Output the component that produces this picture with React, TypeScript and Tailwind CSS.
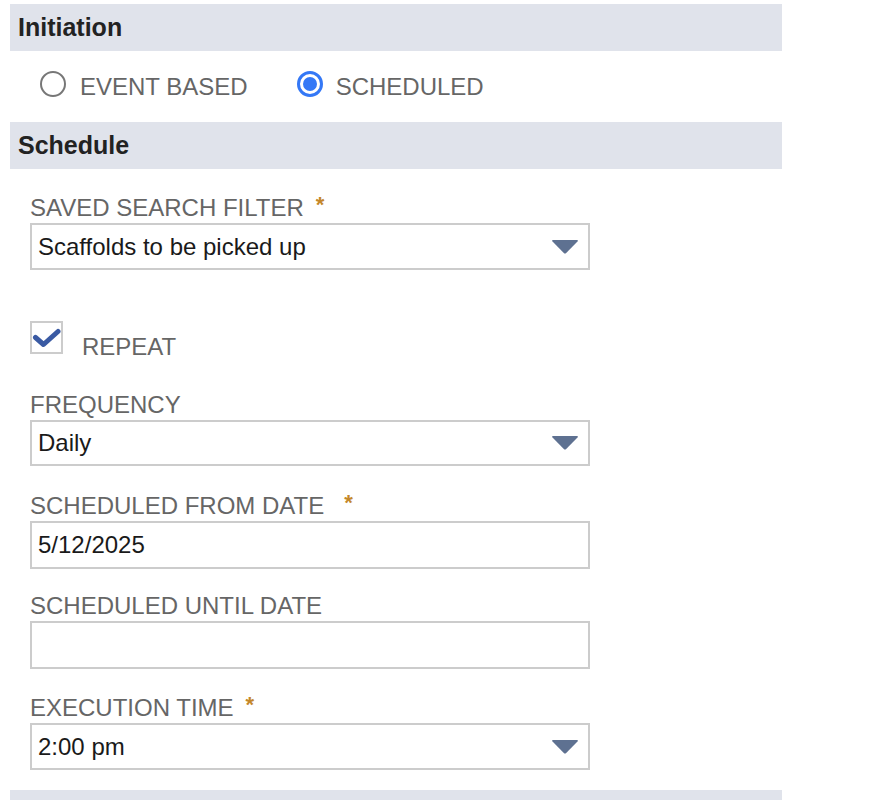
import React from "react";

const font = { fontFamily: '"Liberation Sans", Arial, sans-serif' };

function SectionBar({ title }: { title: string }) {
  return (
    <div className="h-[47px] flex items-center pl-2 bg-[#e0e3eb] text-[25px] font-bold text-[#222] leading-none">
      {title}
    </div>
  );
}

function Arrow() {
  return (
    <svg width="26" height="14" viewBox="0 0 26 14" className="shrink-0">
      <path d="M1 0 L25 0 Q26.5 0 25.5 1.5 L14.2 13 Q13 14.2 11.8 13 L0.5 1.5 Q-0.5 0 1 0 Z" fill="#5e7191" />
    </svg>
  );
}

function Label({ text, required, gap = "ml-3" }: { text: string; required?: boolean; gap?: string }) {
  return (
    <div className="h-[28px] leading-[28px] text-[24px] text-[#666] flex items-start">
      <span>{text}</span>
      {required && <span className={`${gap} text-[#c4872a] text-[22px] font-bold leading-[22px]`}>*</span>}
    </div>
  );
}

function Select({ value, h = "h-[47px]" }: { value: string; h?: string }) {
  return (
    <div className={`${h} mt-px w-[560px] border-2 border-[#cccccc] flex items-center justify-between pl-[6px] pr-[10px] text-[24px] text-[#1a1a1a]`}>
      <span>{value}</span>
      <Arrow />
    </div>
  );
}

function TextBox({ value }: { value: string }) {
  return (
    <div className="h-[48px] mt-px w-[560px] border-2 border-[#cccccc] flex items-center pl-[6px] text-[24px] text-[#1a1a1a]">
      {value}
    </div>
  );
}

export default function App() {
  return (
    <div className="min-h-[800px] bg-white pt-1" style={font}>
      <div className="ml-[10px] w-[772px]">
        <SectionBar title="Initiation" />
        <div className="h-[71px] flex items-center pl-[30px] text-[24px] text-[#666]">
          <div className="flex items-center">
            <span className="w-[26px] h-[26px] rounded-full border-2 border-[#777] -mt-[5px]" />
            <span className="ml-[14px]">EVENT BASED</span>
          </div>
          <div className="flex items-center ml-[49px]">
            <span className="w-[26px] h-[26px] rounded-full border-[3px] border-[#3478f6] flex items-center justify-center -mt-[5px]">
              <span className="w-[14px] h-[14px] rounded-full bg-[#3478f6]" />
            </span>
            <span className="ml-[13px]">SCHEDULED</span>
          </div>
        </div>
        <SectionBar title="Schedule" />

        <div className="pl-5">
          <div className="pt-[25px]">
            <Label text="SAVED SEARCH FILTER" required gap="ml-[12px]" />
            <Select value="Scaffolds to be picked up" />
          </div>

          <div className="mt-[51px] flex items-start h-[36px]">
            <span className="w-[33px] h-[33px] border-2 border-[#cccccc] flex items-center justify-center">
              <svg width="29" height="29" viewBox="0 0 29 29">
                <path d="M3.5 14.5 L11.5 21.5 L26 8.5" fill="none" stroke="#3a5aa3" strokeWidth="5" strokeLinecap="round" strokeLinejoin="round" />
              </svg>
            </span>
            <span className="ml-[19px] mt-[12px] text-[24px] text-[#666] leading-[28px]">REPEAT</span>
          </div>

          <div className="mt-[34px]">
            <Label text="FREQUENCY" />
            <Select value="Daily" h="h-[46px]" />
          </div>

          <div className="mt-[26px]">
            <Label text="SCHEDULED FROM DATE" required gap="ml-[20px]" />
            <TextBox value="5/12/2025" />
          </div>

          <div className="mt-[23px]">
            <Label text="SCHEDULED UNTIL DATE" />
            <TextBox value="" />
          </div>

          <div className="mt-[25px]">
            <Label text="EXECUTION TIME" required gap="ml-[12px]" />
            <Select value="2:00 pm" />
          </div>
        </div>

        <div className="mt-[20px] h-[20px] bg-[#e0e3eb]" />
      </div>
    </div>
  );
}
